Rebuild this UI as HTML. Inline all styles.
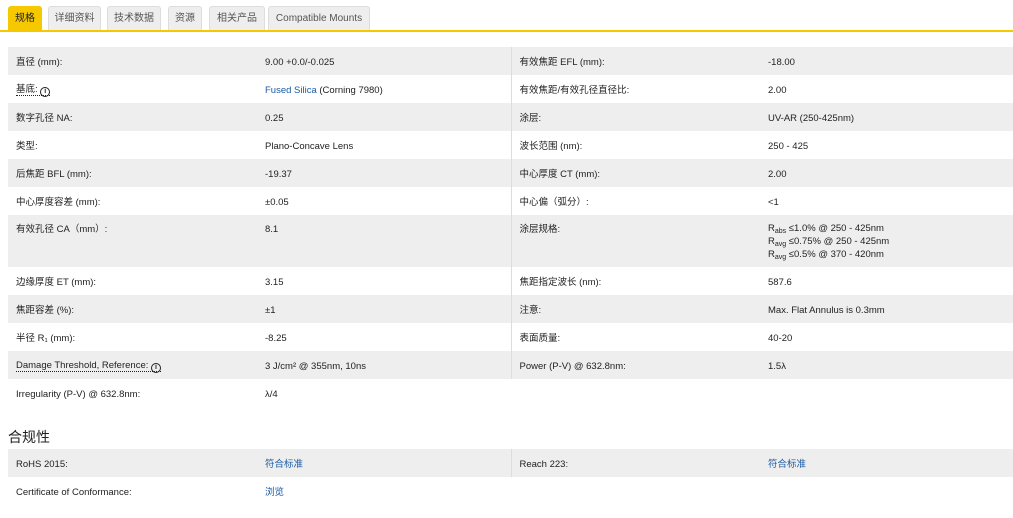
<!DOCTYPE html><html><head><meta charset="utf-8"><style>
body{margin:0;background:#fff;font-family:"Liberation Sans","Noto Sans CJK SC",sans-serif;font-size:9.5px;color:#222;width:1013px;height:518px;overflow:hidden;position:relative}
.tabs{position:absolute;left:8px;top:6px;height:24px}
.tab{position:absolute;top:0;height:23px;line-height:24px;background:#eee;border:1px solid #ddd;border-bottom:none;border-radius:3px 3px 0 0;color:#555;text-align:center;font-size:10px}
.tab.on{background:#f5c800;border-color:#f5c800;color:#222}
.line{position:absolute;left:0;top:30px;width:1013px;height:2px;background:#f5c800}
table{position:absolute;left:8px;border-collapse:collapse;width:1005px;table-layout:fixed}
td{height:28px;padding:3px 8px 0;vertical-align:middle;white-space:nowrap;line-height:12px;box-sizing:border-box;overflow:hidden}
td.s{border-left:1px solid #ddd}
tr.g td{background:#eee}
a{color:#1a5aa6;text-decoration:none}
.u{border-bottom:1px dotted #222}
.i{display:inline-block;width:8px;height:8px;border:1.3px solid #222;border-radius:50%;font-size:7px;line-height:8px;text-align:center;font-weight:bold;vertical-align:-1px}
sub{font-size:7px;line-height:0;vertical-align:-2px}
h3{position:absolute;left:8px;top:428px;margin:0;font-size:14px;line-height:18px;font-weight:normal;color:#222}
.t{vertical-align:top;padding-top:9px}
</style></head><body>
<div class="tabs">
<div class="tab on" style="left:0;width:32px">规格</div>
<div class="tab" style="left:40px;width:51px">详细资料</div>
<div class="tab" style="left:99px;width:52px">技术数据</div>
<div class="tab" style="left:160px;width:32px">资源</div>
<div class="tab" style="left:201px;width:54px">相关产品</div>
<div class="tab" style="left:260px;width:100px">Compatible Mounts</div>
</div>
<div class="line"></div>
<table style="top:47px">
<colgroup><col style="width:249px"><col style="width:254px"><col style="width:249px"><col></colgroup>
<tr class="g"><td>直径 (mm):</td><td>9.00 +0.0/-0.025</td><td class="s">有效焦距 EFL (mm):</td><td>-18.00</td></tr>
<tr><td><span class="u">基底: <span class="i">i</span></span></td><td><a>Fused Silica</a> (Corning 7980)</td><td class="s">有效焦距/有效孔径直径比:</td><td>2.00</td></tr>
<tr class="g"><td>数字孔径 NA:</td><td>0.25</td><td class="s">涂层:</td><td>UV-AR (250-425nm)</td></tr>
<tr><td>类型:</td><td>Plano-Concave Lens</td><td class="s">波长范围 (nm):</td><td>250 - 425</td></tr>
<tr class="g"><td>后焦距 BFL (mm):</td><td>-19.37</td><td class="s">中心厚度 CT (mm):</td><td>2.00</td></tr>
<tr><td>中心厚度容差 (mm):</td><td>±0.05</td><td class="s">中心偏（弧分）:</td><td>&lt;1</td></tr>
<tr class="g" style="height:52px"><td class="t" style="height:52px">有效孔径 CA（mm）:</td><td class="t">8.1</td><td class="s t">涂层规格:</td><td class="t" style="line-height:13px;padding-top:7px">R<sub>abs</sub> ≤1.0% @ 250 - 425nm<br>R<sub>avg</sub> ≤0.75% @ 250 - 425nm<br>R<sub>avg</sub> ≤0.5% @ 370 - 420nm</td></tr>
<tr><td>边缘厚度 ET (mm):</td><td>3.15</td><td class="s">焦距指定波长 (nm):</td><td>587.6</td></tr>
<tr class="g"><td>焦距容差 (%):</td><td>±1</td><td class="s">注意:</td><td>Max. Flat Annulus is 0.3mm</td></tr>
<tr><td>半径 R₁ (mm):</td><td>-8.25</td><td class="s">表面质量:</td><td>40-20</td></tr>
<tr class="g"><td><span class="u">Damage Threshold, Reference: <span class="i">i</span></span></td><td>3 J/cm² @ 355nm, 10ns</td><td class="s">Power (P-V) @ 632.8nm:</td><td>1.5λ</td></tr>
<tr><td>Irregularity (P-V) @ 632.8nm:</td><td>λ/4</td><td></td><td></td></tr>
</table>
<h3>合规性</h3>
<table style="top:449px">
<colgroup><col style="width:249px"><col style="width:254px"><col style="width:249px"><col></colgroup>
<tr class="g"><td>RoHS 2015:</td><td><a>符合标准</a></td><td class="s">Reach 223:</td><td><a>符合标准</a></td></tr>
<tr><td>Certificate of Conformance:</td><td><a>浏览</a></td><td></td><td></td></tr>
</table>
</body></html>
